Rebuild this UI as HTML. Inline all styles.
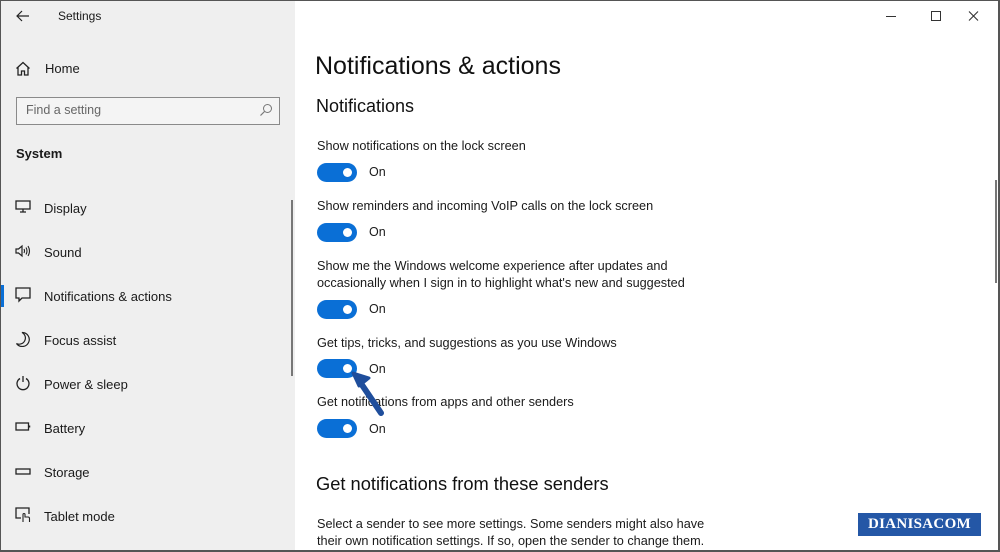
<!DOCTYPE html>
<html><head><meta charset="utf-8"><style>
*{margin:0;padding:0;box-sizing:border-box}
body{width:1000px;height:552px;overflow:hidden;font-family:"Liberation Sans",sans-serif;color:#1a1a1a;background:#fff;position:relative}
.abs{position:absolute;white-space:nowrap}
#side{position:absolute;left:0;top:0;width:295px;height:552px;background:#efefef}
.frame{position:absolute;left:0;top:0;width:1000px;height:552px;border:1px solid #555;border-width:1px 2px 2px 1px;pointer-events:none}
.nav{position:absolute;left:44px;font-size:13px;color:#1a1a1a}
.ico{position:absolute;left:15px}
.t{font-size:12.7px;color:#1a1a1a;position:absolute;left:317px;line-height:16.5px}
.tog{position:absolute;left:317px;width:40px;height:19px;border-radius:10px;background:#0a6fd6}
.tog:after{content:"";position:absolute;right:5px;top:5px;width:9px;height:9px;border-radius:50%;background:#fff}
.on{position:absolute;left:369px;font-size:12.5px}
</style></head><body>
<div id="side">
 <svg class="abs" style="left:16px;top:10px" width="14" height="12" viewBox="0 0 14 12"><path d="M13 6H1M6 1L1 6l5 5" fill="none" stroke="#222" stroke-width="1.2"/></svg>
 <div class="abs" style="left:58px;top:9px;font-size:12px">Settings</div>
 <svg class="ico" style="top:61px" width="16" height="15" viewBox="0 0 16 15"><path d="M1.5 7.5L8 1.5l6.5 6M3 6v8h3.5v-4h3v4H13V6" fill="none" stroke="#222" stroke-width="1.3"/></svg>
 <div class="nav" style="left:45px;top:61px">Home</div>
 <div class="abs" style="left:16px;top:97px;width:264px;height:28px;border:1px solid #8a8a8a;background:#f4f4f4"></div>
 <div class="abs" style="left:26px;top:103px;font-size:12.5px;color:#666">Find a setting</div>
 <svg class="abs" style="left:259px;top:103px" width="14" height="14" viewBox="0 0 14 14"><circle cx="8.5" cy="5.5" r="4" fill="none" stroke="#777" stroke-width="1"/><path d="M5.5 8.5L1.5 12.5" stroke="#777" stroke-width="1.2"/></svg>
 <div class="abs" style="left:16px;top:146px;font-size:13px;font-weight:bold">System</div>
 <div class="abs" style="left:291px;top:200px;width:2px;height:176px;background:#777"></div>
 <div class="abs" style="left:0;top:285px;width:4px;height:22px;background:#0a6fd6"></div>
 <svg class="ico" style="top:200px" width="16" height="14" viewBox="0 0 16 14"><rect x="1" y="1" width="14" height="8" fill="none" stroke="#222" stroke-width="1.3"/><path d="M8 9v3M5 12h6" stroke="#222" stroke-width="1.3"/></svg>
 <div class="nav" style="top:201px">Display</div>
 <svg class="ico" style="top:244px" width="16" height="14" viewBox="0 0 16 14"><path d="M1 5h2.5L7 2v10L3.5 9H1z" fill="none" stroke="#222" stroke-width="1.2"/><path d="M9 5q1 2 0 4M11 3.5q2 3.5 0 7M13 2q3 5 0 10" fill="none" stroke="#222" stroke-width="1.1"/></svg>
 <div class="nav" style="top:245px">Sound</div>
 <svg class="ico" style="top:287px" width="16" height="16" viewBox="0 0 16 16"><path d="M1 1h14v10H7l-3 3v-3H1z" fill="none" stroke="#222" stroke-width="1.3"/></svg>
 <div class="nav" style="top:289px">Notifications &amp; actions</div>
 <svg class="ico" style="top:331px" width="16" height="16" viewBox="0 0 16 16"><path d="M7 1.5a7 7 0 1 1-5.5 11A6 6 0 0 0 7 1.5z" fill="none" stroke="#222" stroke-width="1.2"/></svg>
 <div class="nav" style="top:333px">Focus assist</div>
 <svg class="ico" style="top:375px" width="16" height="16" viewBox="0 0 16 16"><path d="M5 3.5a6 6 0 1 0 6 0M8 1v6" fill="none" stroke="#222" stroke-width="1.3"/></svg>
 <div class="nav" style="top:377px">Power &amp; sleep</div>
 <svg class="ico" style="top:422px" width="16" height="10" viewBox="0 0 16 10"><rect x="1" y="1" width="12.5" height="7" fill="none" stroke="#222" stroke-width="1.3"/><path d="M14.5 3.5v2" stroke="#222" stroke-width="1.5"/></svg>
 <div class="nav" style="top:421px">Battery</div>
 <svg class="ico" style="top:468px" width="16" height="8" viewBox="0 0 16 8"><rect x="1" y="1" width="14" height="5" fill="none" stroke="#222" stroke-width="1.3"/></svg>
 <div class="nav" style="top:465px">Storage</div>
 <svg class="ico" style="top:507px" width="16" height="16" viewBox="0 0 16 16"><path d="M6 11H1V1h13v6" fill="none" stroke="#222" stroke-width="1.3"/><path d="M8 15V7.5a1 1 0 0 1 2 0V10h3a1.5 1.5 0 0 1 1.5 1.5V15" fill="none" stroke="#222" stroke-width="1.1"/></svg>
 <div class="nav" style="top:509px">Tablet mode</div>
</div>
<svg class="abs" style="left:885px;top:10px" width="100" height="14" viewBox="0 0 100 14"><path d="M1 6.5h10" stroke="#333" stroke-width="1"/><rect x="46.5" y="1.5" width="9" height="9" fill="none" stroke="#333"/><path d="M84 1.5l9 9M93 1.5l-9 9" stroke="#333" stroke-width="1.1"/></svg>
<div class="abs" style="left:995px;top:180px;width:2px;height:103px;background:#777"></div>
<div class="abs" style="left:315px;top:52px;font-size:25px;color:#111">Notifications &amp; actions</div>
<div class="abs" style="left:316px;top:96px;font-size:18px;color:#111">Notifications</div>
<div class="t" style="top:138px">Show notifications on the lock screen</div>
<div class="tog" style="top:163px"></div><div class="on" style="top:165px">On</div>
<div class="t" style="top:198px">Show reminders and incoming VoIP calls on the lock screen</div>
<div class="tog" style="top:223px"></div><div class="on" style="top:225px">On</div>
<div class="t" style="top:258px">Show me the Windows welcome experience after updates and<br>occasionally when I sign in to highlight what's new and suggested</div>
<div class="tog" style="top:300px"></div><div class="on" style="top:302px">On</div>
<div class="t" style="top:335px">Get tips, tricks, and suggestions as you use Windows</div>
<div class="tog" style="top:359px"></div><div class="on" style="top:362px">On</div>
<div class="t" style="top:394px">Get notifications from apps and other senders</div>
<div class="tog" style="top:419px"></div><div class="on" style="top:422px">On</div>
<svg class="abs" style="left:350px;top:370px" width="40" height="48" viewBox="0 0 40 48"><path d="M31 43L10 12" stroke="#1f4e9c" stroke-width="6" stroke-linecap="round"/><path d="M3 3l16 5-10 8z" fill="#1f4e9c" stroke="#1f4e9c" stroke-width="3" stroke-linejoin="round"/></svg>
<div class="abs" style="left:316px;top:473px;font-size:18.3px;color:#111">Get notifications from these senders</div>
<div class="t" style="top:516px">Select a sender to see more settings. Some senders might also have<br>their own notification settings. If so, open the sender to change them.</div>
<div class="abs" style="left:858px;top:513px;width:123px;height:23px;background:#2457a6;color:#fff;font-family:'Liberation Serif',serif;font-weight:bold;font-size:15px;text-align:center;line-height:23px;letter-spacing:0.3px">DIANISACOM</div>
<div class="frame"></div>
</body></html>
